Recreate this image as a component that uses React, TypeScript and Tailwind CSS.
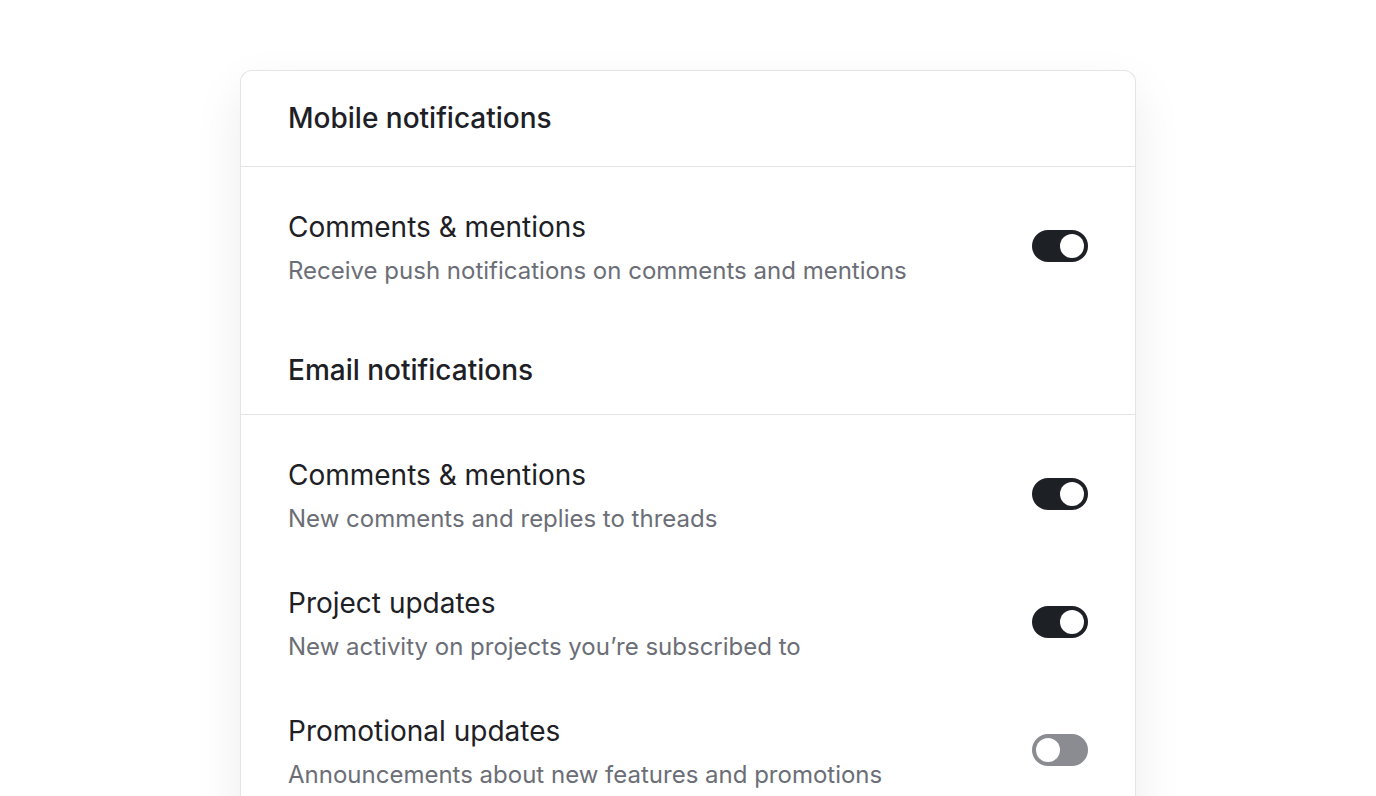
type Setting = {
  title: string;
  description: string;
  enabled: boolean;
};

const mobileSettings: Setting[] = [
  { title: 'Comments & mentions', description: 'Receive push notifications on comments and mentions', enabled: true },
];

const emailSettings: Setting[] = [
  { title: 'Comments & mentions', description: 'New comments and replies to threads', enabled: true },
  { title: 'Project updates', description: 'New activity on projects you’re subscribed to', enabled: true },
  { title: 'Promotional updates', description: 'Announcements about new features and promotions', enabled: false },
];

function Toggle({ on }: { on: boolean }) {
  return (
    <button
      role="switch"
      aria-checked={on}
      className={`mt-[21px] flex h-[32px] w-[56px] shrink-0 items-center rounded-full p-[4px] ${
        on ? 'justify-end bg-[#1d2025]' : 'justify-start bg-[#8a8c92]'
      }`}
    >
      <span className="block h-[24px] w-[24px] rounded-full bg-white" />
    </button>
  );
}

function SectionHeader({ children, pb }: { children: string; pb: string }) {
  return (
    <div className={`border-b border-[#e3e4e6] pl-[47px] pr-[47px] pt-[29px] ${pb}`}>
      <h2 className="text-[28px] font-medium leading-[36px] text-[#1d2025]">{children}</h2>
    </div>
  );
}

function SettingRow({ s }: { s: Setting }) {
  return (
    <li className="flex items-start justify-between gap-6">
      <div className="min-w-0">
        <p className="text-[28px] leading-[36px] text-[#1d2025]">{s.title}</p>
        <p className="mt-[12px] text-[24px] leading-[28px] text-[#6b6e76]">{s.description}</p>
      </div>
      <Toggle on={s.enabled} />
    </li>
  );
}

export default function App() {
  return (
    <div
      className="min-h-screen overflow-hidden bg-white pt-[70px]"
      style={{ fontFamily: 'Inter, "Noto Sans", sans-serif' }}
    >
      <div className="mx-auto w-[896px] rounded-t-[12px] border border-b-0 border-[#e3e4e6] bg-white shadow-[0_20px_50px_rgba(0,0,0,0.08)]">
        <SectionHeader pb="pb-[30px]">Mobile notifications</SectionHeader>
        <ul className="flex flex-col gap-[52px] pl-[47px] pr-[47px] pt-[42px] pb-[38px]">
          {mobileSettings.map((s, i) => (
            <SettingRow key={i} s={s} />
          ))}
        </ul>
        <SectionHeader pb="pb-[26px]">Email notifications</SectionHeader>
        <ul className="flex flex-col gap-[52px] pl-[47px] pr-[47px] pt-[42px] pb-[40px]">
          {emailSettings.map((s, i) => (
            <SettingRow key={i} s={s} />
          ))}
        </ul>
      </div>
    </div>
  );
}
